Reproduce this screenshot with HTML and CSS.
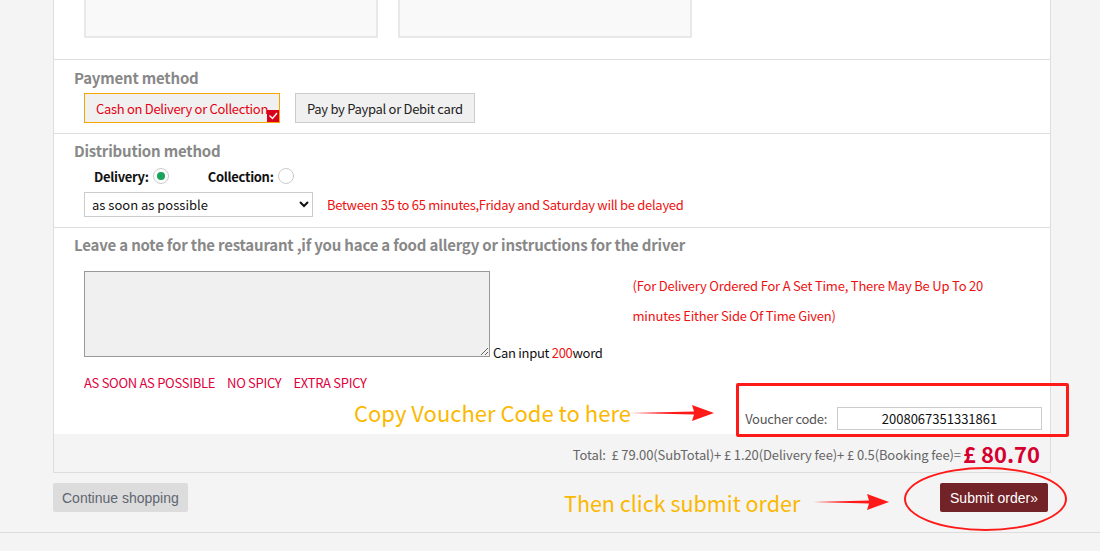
FILE: index.html
```html
<!DOCTYPE html>
<html lang="en">

<head>
  <meta charset="UTF-8">
  <meta name="viewport" content="width=device-width, initial-scale=1.0">
  <title>Checkout</title>
  <link rel="stylesheet" href="styles.css">
</head>

<body>
  <div class="page">
    <div class="order-panel">
      <div class="section cards">
        <div class="card"></div>
        <div class="card"></div>
      </div>

      <div class="section payment">
        <h3>Payment method</h3>
        <div class="pay-options">
          <button class="pay-btn selected">Cash on Delivery or Collection
            <span class="tick">
              <svg width="12" height="12" viewBox="0 0 12 12"><path d="M2.5 5.5 L5.5 8.5 L10 3" fill="none" stroke="#fff" stroke-width="1.4" /></svg>
            </span>
          </button>
          <button class="pay-btn">Pay by Paypal or Debit card</button>
        </div>
      </div>

      <div class="section distribution">
        <h3>Distribution method</h3>
        <div class="radio-row">
          <label class="radio-item">Delivery: <span class="radio checked"></span></label>
          <label class="radio-item">Collection: <span class="radio"></span></label>
        </div>
        <div class="time-row">
          <select class="time-select">
            <option>as soon as possible</option>
          </select>
          <span class="red-note">Between 35 to 65 minutes,Friday and Saturday will be delayed</span>
        </div>
      </div>

      <div class="section note">
        <h3>Leave a note for the restaurant ,if you hace a food allergy or instructions for the driver</h3>
        <div class="note-row">
          <textarea class="note-box"></textarea>
          <span class="word-count">Can input <em>200</em>word</span>
          <p class="set-time">(For Delivery Ordered For A Set Time, There May Be Up To 20 minutes Either Side Of Time Given)</p>
        </div>
        <div class="tags">
          <a href="#">AS SOON AS POSSIBLE</a>
          <a href="#">NO SPICY</a>
          <a href="#">EXTRA SPICY</a>
        </div>
        <div class="voucher-row">
          <label>Voucher code:</label>
          <input class="voucher-input" type="text" value="2008067351331861">
        </div>
      </div>

      <div class="total-bar">
        <span class="total-text">Total:&nbsp;&nbsp;£ 79.00(SubTotal)+ £ 1.20(Delivery fee)+ £ 0.5(Booking fee)=</span>
        <span class="total-price">£ 80.70</span>
      </div>
    </div>

    <div class="actions">
      <button class="continue-btn">Continue shopping</button>
      <button class="submit-btn">Submit order»</button>
    </div>

    <div class="footer"></div>

    <!-- annotations drawn over the screenshot -->
    <div class="mark-box"></div>
    <div class="mark-ellipse"></div>
    <span class="hint hint-voucher">Copy Voucher Code to here</span>
    <span class="hint hint-submit">Then click submit order</span>
    <svg class="arrow arrow-voucher" width="84" height="20" viewBox="0 0 84 20">
      <path d="M0 10 L64 8.6 L62 2 L84 10 L62 18 L64 11.4 Z" fill="#ff1a1a" />
    </svg>
    <svg class="arrow arrow-submit" width="76" height="20" viewBox="0 0 76 20">
      <path d="M0 10 L56 8.4 L54 2 L76 10 L54 18 L56 11.6 Z" fill="#ff1a1a" />
    </svg>
  </div>
</body>

</html>
```

FILE: styles.css
```css
body {
  margin: 0;
  padding: 0;
  background-color: #f4f4f4;
  font-family: 'Noto Sans CJK SC', 'Noto Sans', sans-serif;
  font-size: 13px;
  letter-spacing: -0.3px;
  color: #333;
}

.page {
  position: relative;
  height: 551px;
  overflow: hidden;
}

.order-panel {
  margin-left: 53px;
  width: 998px;
  box-sizing: border-box;
  background-color: #fff;
  border: 1px solid #ddd;
  border-top: none;
}

.section {
  border-bottom: 1px solid #ddd;
  padding: 0 20px;
}

h3 {
  margin: 0;
  font-size: 15px;
  line-height: 20px;
  font-weight: bold;
  letter-spacing: -0.2px;
  color: #888;
}

/* address cards, top cut off */
.cards {
  display: flex;
  gap: 20px;
  padding: 0 30px 21px;
}

.card {
  width: 294px;
  height: 38px;
  box-sizing: border-box;
  background-color: #f9f9f9;
  border: 2px solid #e8e8e8;
  border-top: none;
}

/* payment */
.payment {
  padding-top: 8px;
  padding-bottom: 10px;
}

.pay-options {
  display: flex;
  gap: 15px;
  margin-top: 5px;
  padding-left: 10px;
}

.pay-btn {
  position: relative;
  height: 30px;
  padding: 0 11px;
  font-family: inherit;
  font-size: 13px;
  letter-spacing: -0.3px;
  color: #222;
  background-color: #f0f0f0;
  border: 1px solid #ccc;
}

.pay-btn.selected {
  color: #e60012;
  border-color: #f5a700;
}

.tick {
  position: absolute;
  right: 0;
  bottom: 0;
  width: 12px;
  height: 12px;
  background-color: #d9001b;
  display: flex;
}

/* distribution */
.distribution {
  padding-top: 7px;
  padding-bottom: 10px;
}

.radio-row {
  display: flex;
  gap: 39px;
  margin-top: 5px;
  padding-left: 20px;
  height: 20px;
  align-items: center;
}

.radio-item {
  display: flex;
  align-items: center;
  gap: 4px;
  font-weight: bold;
  color: #111;
}

.radio {
  width: 16px;
  height: 16px;
  box-sizing: border-box;
  border: 1px solid #ccc;
  border-radius: 50%;
  display: flex;
  align-items: center;
  justify-content: center;
}

.radio.checked::after {
  content: '';
  width: 8px;
  height: 8px;
  border-radius: 50%;
  background-color: #19a35d;
}

.time-row {
  display: flex;
  align-items: center;
  gap: 14px;
  margin-top: 6px;
  padding-left: 10px;
}

.time-select {
  width: 229px;
  height: 25px;
  font-family: inherit;
  font-size: 13px;
  color: #111;
  background-color: #fff;
  border: 1px solid #ccc;
  padding: 0 3px;
}

.red-note {
  color: #ee1111;
}

/* note */
.note {
  padding-top: 7px;
  padding-right: 8px;
  border-bottom: none;
}

.note-row {
  display: flex;
  align-items: flex-end;
  margin-top: 16px;
  padding-left: 10px;
}

.note-box {
  width: 406px;
  height: 86px;
  box-sizing: border-box;
  margin: 0;
  background-color: #f0f0f0;
  border: 1px solid #999;
  resize: vertical;
}

.word-count {
  margin: 0 0 -4px 3px;
  line-height: 16px;
  color: #111;
}

.word-count em {
  font-style: normal;
  color: #ee1111;
}

.set-time {
  align-self: flex-start;
  width: 375px;
  margin: 0 0 0 30px;
  line-height: 30px;
  letter-spacing: -0.2px;
  color: #ee1111;
}

.tags {
  display: flex;
  gap: 12px;
  margin-top: 18px;
  padding-left: 10px;
  line-height: 16px;
}

.tags a {
  color: #e0003c;
  text-decoration: none;
}

.voucher-row {
  display: flex;
  justify-content: flex-end;
  align-items: center;
  gap: 10px;
  margin-top: 16px;
  padding-bottom: 4px;
  color: #555;
}

.voucher-input {
  width: 205px;
  height: 23px;
  box-sizing: border-box;
  border: 1px solid #ccc;
  font-family: inherit;
  font-size: 13px;
  color: #111;
  text-align: center;
}

.total-bar {
  display: flex;
  justify-content: flex-end;
  align-items: center;
  gap: 2px;
  height: 38px;
  padding-right: 10px;
  background-color: #f4f4f4;
}

.total-text {
  margin-top: 2px;
  letter-spacing: -0.1px;
  color: #666;
}

.total-price {
  font-size: 22px;
  font-weight: bold;
  letter-spacing: 0;
  color: #d6002f;
}

/* bottom buttons */
.actions {
  display: flex;
  justify-content: space-between;
  margin: 10px 52px 20px 53px;
}

.continue-btn {
  height: 29px;
  padding: 0 9px;
  font-family: 'Liberation Sans', Arial, sans-serif;
  font-size: 14px;
  color: #5f6670;
  background-color: #dcdcdc;
  border: none;
  border-radius: 2px;
}

.submit-btn {
  height: 29px;
  width: 108px;
  font-family: 'Liberation Sans', Arial, sans-serif;
  font-size: 14px;
  color: #fff;
  background-color: #722328;
  border: none;
  border-radius: 2px;
}

.footer {
  border-top: 1px solid #ddd;
  height: 20px;
}

/* annotations */
.mark-box {
  position: absolute;
  left: 736px;
  top: 383px;
  width: 333px;
  height: 54px;
  box-sizing: border-box;
  border: 3px solid #ff1a1a;
  border-radius: 2px;
}

.mark-ellipse {
  position: absolute;
  left: 904px;
  top: 467px;
  width: 163px;
  height: 64px;
  box-sizing: border-box;
  border: 2px solid #ff1a1a;
  border-radius: 50%;
}

.hint {
  position: absolute;
  color: #fbb800;
  letter-spacing: 0;
  white-space: nowrap;
}

.hint-voucher {
  left: 354px;
  top: 396px;
  font-size: 22px;
}

.hint-submit {
  left: 564px;
  top: 487px;
  font-size: 21.5px;
}

.arrow {
  position: absolute;
}

.arrow-voucher {
  left: 630px;
  top: 403px;
}

.arrow-submit {
  left: 813px;
  top: 492px;
}
```
